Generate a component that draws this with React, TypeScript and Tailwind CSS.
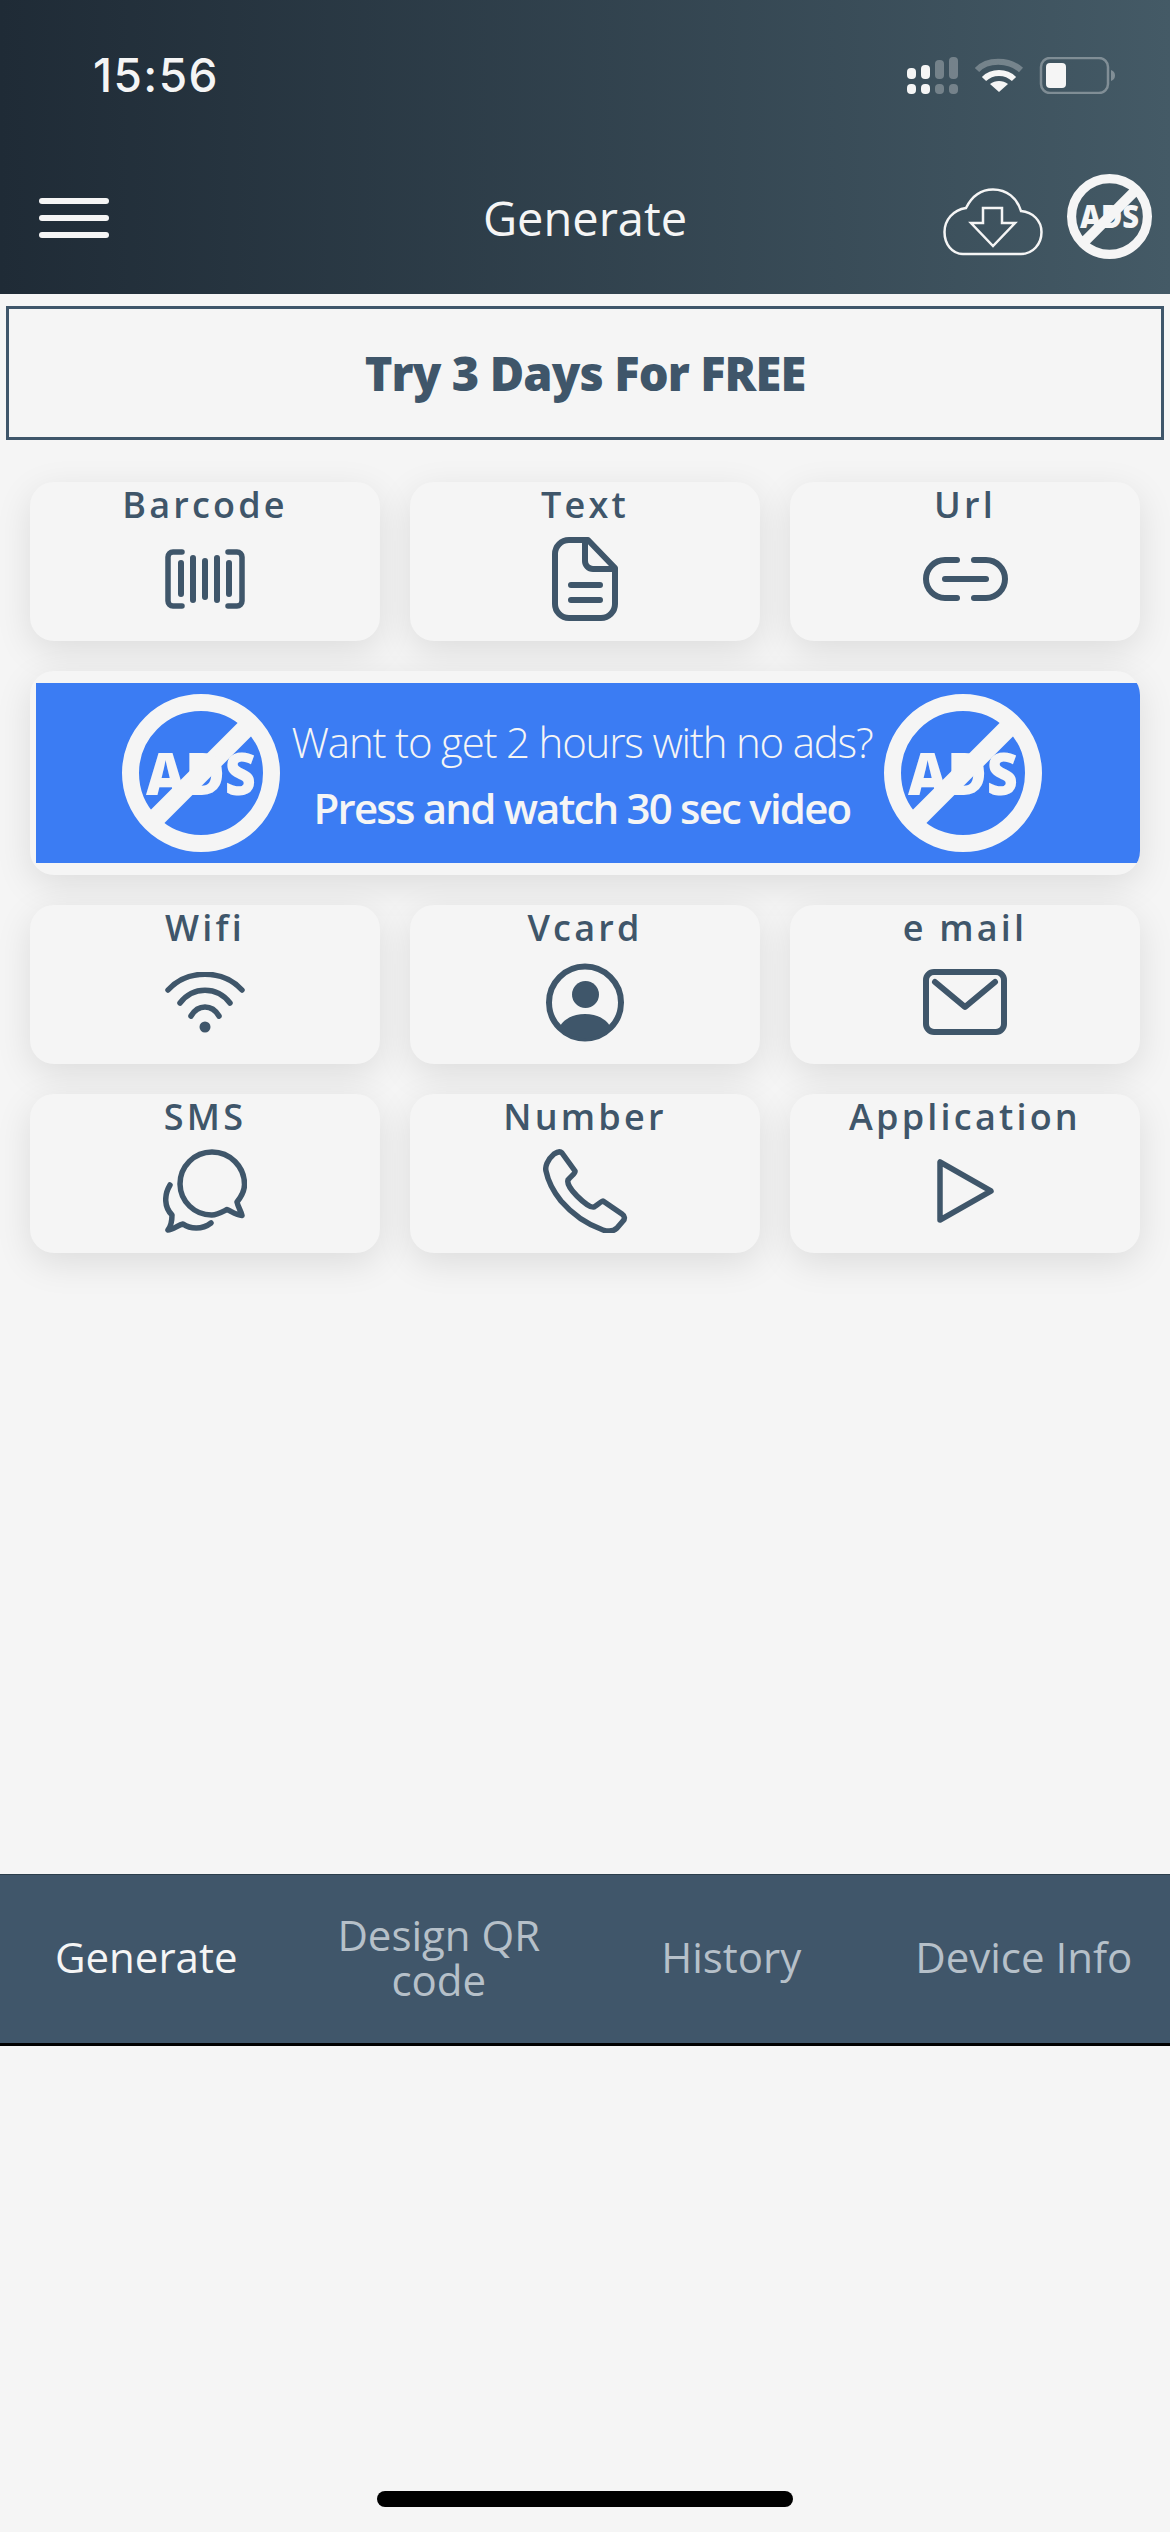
import React from "react";

const INK = "#3f566a";

// no-ads badge, the text and the slash are both plain white so they merge
const NoAds = ({ className }: { className: string }) => (
  <svg viewBox="0 0 158 158" className={className}>
    <circle cx="79" cy="79" r="70.5" fill="none" stroke="#f5f5f5" strokeWidth="17" />
    <line x1="32" y1="126" x2="126" y2="32" stroke="#f5f5f5" strokeWidth="19" />
    <text
      x="79"
      y="101"
      textAnchor="middle"
      textLength="110"
      lengthAdjust="spacingAndGlyphs"
      fill="#f5f5f5"
      fontSize="58"
      fontWeight="800"
      fontFamily="'Open Sans', sans-serif"
    >
      ADS
    </text>
  </svg>
);

const StatusIcons = () => (
  <svg viewBox="0 0 209 37" className="w-[209px] h-[37px]">
    <g fill="#f5f5f5">
      <rect x="0" y="11" width="9" height="11" rx="4" />
      <rect x="14" y="8" width="9" height="14" rx="4" />
      <rect x="0" y="27" width="9" height="10" rx="4" />
      <rect x="14" y="27" width="9" height="10" rx="4" />
    </g>
    <g fill="#f5f5f5" opacity="0.3">
      <rect x="28" y="3" width="9" height="19" rx="4" />
      <rect x="42" y="0" width="9" height="22" rx="4" />
      <rect x="28" y="27" width="9" height="10" rx="4" />
      <rect x="42" y="27" width="9" height="10" rx="4" />
    </g>
    <path d="M70 13 C80 2 102 2 114 13" fill="none" stroke="#f5f5f5" strokeOpacity="0.3" strokeWidth="6" />
    <path d="M77 22 C85 14 99 14 107 22" fill="none" stroke="#f5f5f5" strokeWidth="6" />
    <path d="M92 35 L83 27 C88 23 96 23 101 27 Z" fill="#f5f5f5" />
    <rect x="134" y="1" width="67" height="35" rx="9" fill="none" stroke="#f5f5f5" strokeOpacity="0.35" strokeWidth="2.5" />
    <rect x="139" y="6" width="20" height="25" rx="4" fill="#f5f5f5" />
    <path d="M204 13 C207 14 208 16 208 18.5 C208 21 207 23 204 24 Z" fill="#f5f5f5" fillOpacity="0.35" />
  </svg>
);

const Cloud = () => (
  <svg viewBox="0 0 100 68" className="w-[100px] h-[68px]" fill="none" stroke="#f5f5f5" strokeWidth="2.5">
    <path d="M20 66 C9 66 1.5 56 1.5 44 C1.5 32 10 22 23 20 C29 8 38 1.5 50 1.5 C64 1.5 74 10 78 23 C90 24 98.5 33 98.5 44 C98.5 56 90 66 78 66 Z" />
    <path d="M40 20 H59 V35 H72 L50 58 L28 35 H40 Z" />
  </svg>
);

const icons: Record<string, React.ReactNode> = {
  Barcode: (
    <svg viewBox="0 0 80 60" className="w-[80px] h-[60px]" fill="none" stroke={INK} strokeWidth="5.5" strokeLinecap="round">
      <path d="M17 3H8a5 5 0 0 0-5 5v44a5 5 0 0 0 5 5h9" />
      <path d="M63 3h9a5 5 0 0 1 5 5v44a5 5 0 0 1-5 5h-9" />
      <path d="M16 14v31M28 9v42M40 12v36M52 9v42M64 14v31" strokeWidth="6" />
    </svg>
  ),
  Text: (
    <svg viewBox="0 0 66 84" className="w-[66px] h-[84px]" fill="none" stroke={INK} strokeWidth="6" strokeLinecap="round" strokeLinejoin="round">
      <path d="M17 3H36L63 31V67a14 14 0 0 1-14 14H17a14 14 0 0 1-14-14V17a14 14 0 0 1 14-14Z" />
      <path d="M33 3v21a8 8 0 0 0 8 8h21" />
      <path d="M19 48h29M19 63h29" />
    </svg>
  ),
  Url: (
    <svg viewBox="0 0 85 44" className="w-[85px] h-[44px]" fill="none" stroke={INK} strokeWidth="6" strokeLinecap="round">
      <path d="M34 3H22a19 19 0 0 0 0 38h12" />
      <path d="M51 3h12a19 19 0 0 1 0 38H51" />
      <path d="M22 22h41" />
    </svg>
  ),
  Wifi: (
    <svg viewBox="0 0 80 61" className="w-[80px] h-[61px]" fill="none" stroke={INK} strokeWidth="5.5" strokeLinecap="round">
      <path d="M3 18C22 -3 58 -3 77 18" />
      <path d="M15 31C28 14 52 14 65 31" />
      <path d="M26 44C33 32 47 32 54 44" />
      <circle cx="40" cy="55" r="5.5" fill={INK} stroke="none" />
    </svg>
  ),
  Vcard: (
    <svg viewBox="0 0 78 79" className="w-[78px] h-[79px]">
      <circle cx="39" cy="39.5" r="36" fill="none" stroke={INK} strokeWidth="6" />
      <circle cx="39.5" cy="31.5" r="13.5" fill={INK} />
      <path d="M13 65 C18 55 28 51 39 51 C50 51 60 55 65 65 A38 38 0 0 1 13 65Z" fill={INK} />
    </svg>
  ),
  "e mail": (
    <svg viewBox="0 0 84 66" className="w-[84px] h-[66px]" fill="none" stroke={INK} strokeWidth="6" strokeLinecap="round" strokeLinejoin="round">
      <rect x="3" y="3" width="78" height="60" rx="8" />
      <path d="M12 13L42 38L72 13" />
    </svg>
  ),
  SMS: (
    <svg viewBox="0 0 84 84" className="w-[84px] h-[84px]" fill="none" stroke={INK} strokeWidth="5.5" strokeLinecap="round" strokeLinejoin="round">
      <path d="M49 3A32.5 32.5 0 0 1 81.5 35.5C81.5 41 78 48 74 53C75 58 78 62 79 66.5C73 66 68 62 64 60.5C59 63 54 66 49 66A31.5 31.5 0 0 1 17 35A32 32 0 0 1 49 3Z" />
      <path d="M7 36C1 46 1 58 9 66C9 72 8 77 5 81C10 81 15 76 20 75C27 80 39 81 48 74" />
    </svg>
  ),
  Number: (
    <svg viewBox="0 0 85 84" className="w-[85px] h-[84px]" fill="none" stroke={INK} strokeWidth="5.5" strokeLinejoin="round">
      <path d="M11 5C14 3 17 2 19 4L32 22C33 24 28 27 25 31C24 34 27 40 34 47C41 54 48 59 51 58C53 57 57 53 60 52L79 65C82 67 82 70 80 72L74 79C71 82 66 83 60 81C46 76 30 66 18 52C10 42 5 32 3 22C2 18 4 11 11 5Z" />
    </svg>
  ),
  Application: (
    <svg viewBox="0 0 60 68" className="w-[60px] h-[68px]" fill="none" stroke={INK} strokeWidth="5.5" strokeLinejoin="round">
      <path d="M5 5V63L56 34Z" />
    </svg>
  ),
};

const Card = ({ label }: { label: string }) => (
  <div className="h-[159px] flex flex-col items-center rounded-[24px] bg-[#f5f5f5] shadow-[0_10px_36px_rgba(0,0,0,0.1)]">
    <div className="h-[46px] text-[36px] leading-[46px] font-semibold tracking-[3.2px] text-[#3f566a]">{label}</div>
    <div className="flex-1 pb-[11px] flex items-center justify-center">{icons[label]}</div>
  </div>
);

const Row = ({ labels }: { labels: string[] }) => (
  <div className="grid grid-cols-3 gap-[30px]">
    {labels.map((label) => (
      <Card key={label} label={label} />
    ))}
  </div>
);

const tabs = ["Generate", "Design QR code", "History", "Device Info"];

const App: React.FC = () => {
  return (
    <div className="h-[2532px] flex flex-col bg-[#f5f5f5] font-['Open_Sans',sans-serif]">
      <header className="h-[294px] bg-gradient-to-r from-[#1f2b36] to-[#445a66]">
        <div className="pt-[50px] pl-[93px] pr-[54px] flex items-center justify-between">
          <span className="text-[46px] leading-[50px] font-medium tracking-[1.4px] text-[#f5f5f5] font-['Inter',sans-serif]">15:56</span>
          <StatusIcons />
        </div>
        <div className="mt-[74px] px-[18px] grid grid-cols-[1fr_auto_1fr] items-start">
          <div className="mt-[24px] ml-[21px] w-[70px] flex flex-col gap-[11px]">
            <div className="h-[6px] rounded-full bg-[#f5f5f5]" />
            <div className="h-[6px] rounded-full bg-[#f5f5f5]" />
            <div className="h-[6px] rounded-full bg-[#f5f5f5]" />
          </div>
          <div className="mt-[14px] text-[47px] leading-[60px] font-medium text-[#f5f5f5]">Generate</div>
          <div className="flex justify-end gap-[24px]">
            <div className="mt-[14px]">
              <Cloud />
            </div>
            <NoAds className="w-[85px] h-[85px]" />
          </div>
        </div>
      </header>

      <main className="flex-1">
        <div className="mt-[12px] mx-[6px] h-[134px] border-[3px] border-[#3f566a] flex items-center justify-center text-[47px] font-extrabold tracking-[-0.9px] text-[#3f566a]">
          Try 3 Days For FREE
        </div>
        <div className="mt-[42px] px-[30px] flex flex-col gap-[30px]">
          <Row labels={["Barcode", "Text", "Url"]} />
          <div className="pl-[6px] py-[12px] rounded-[24px] overflow-hidden bg-[#f5f5f5] shadow-[0_10px_36px_rgba(0,0,0,0.1)]">
            <div className="h-[180px] pl-[86px] flex items-center bg-[#3b7cf3]">
              <NoAds className="w-[158px] h-[158px]" />
              <div className="w-[604px] pt-[3px] flex flex-col items-center gap-[20px] text-[42px] leading-[46px] text-[#f5f5f5]">
                <div className="font-light tracking-[-1.2px]">Want to get 2 hours with no ads?</div>
                <div className="font-semibold tracking-[-1.8px]">Press and watch 30 sec video</div>
              </div>
              <NoAds className="w-[158px] h-[158px]" />
            </div>
          </div>
          <Row labels={["Wifi", "Vcard", "e mail"]} />
          <Row labels={["SMS", "Number", "Application"]} />
        </div>
      </main>

      <nav className="h-[172px] pb-[5px] grid grid-cols-4 items-center bg-[#40566a] border-t border-[#2c3e4c] border-b-[3px] border-b-black">
        {tabs.map((tab, index) => (
          <div
            key={tab}
            className={
              index === 0
                ? "text-center text-[42px] leading-[45px] text-[#f5f5f5]"
                : "text-center text-[42px] leading-[45px] text-[#b6c0c9] px-[30px]"
            }
          >
            {tab}
          </div>
        ))}
      </nav>

      <div className="h-[486px] pb-[25px] flex items-end justify-center">
        <div className="w-[416px] h-[16px] rounded-full bg-black" />
      </div>
    </div>
  );
};

export default App;
